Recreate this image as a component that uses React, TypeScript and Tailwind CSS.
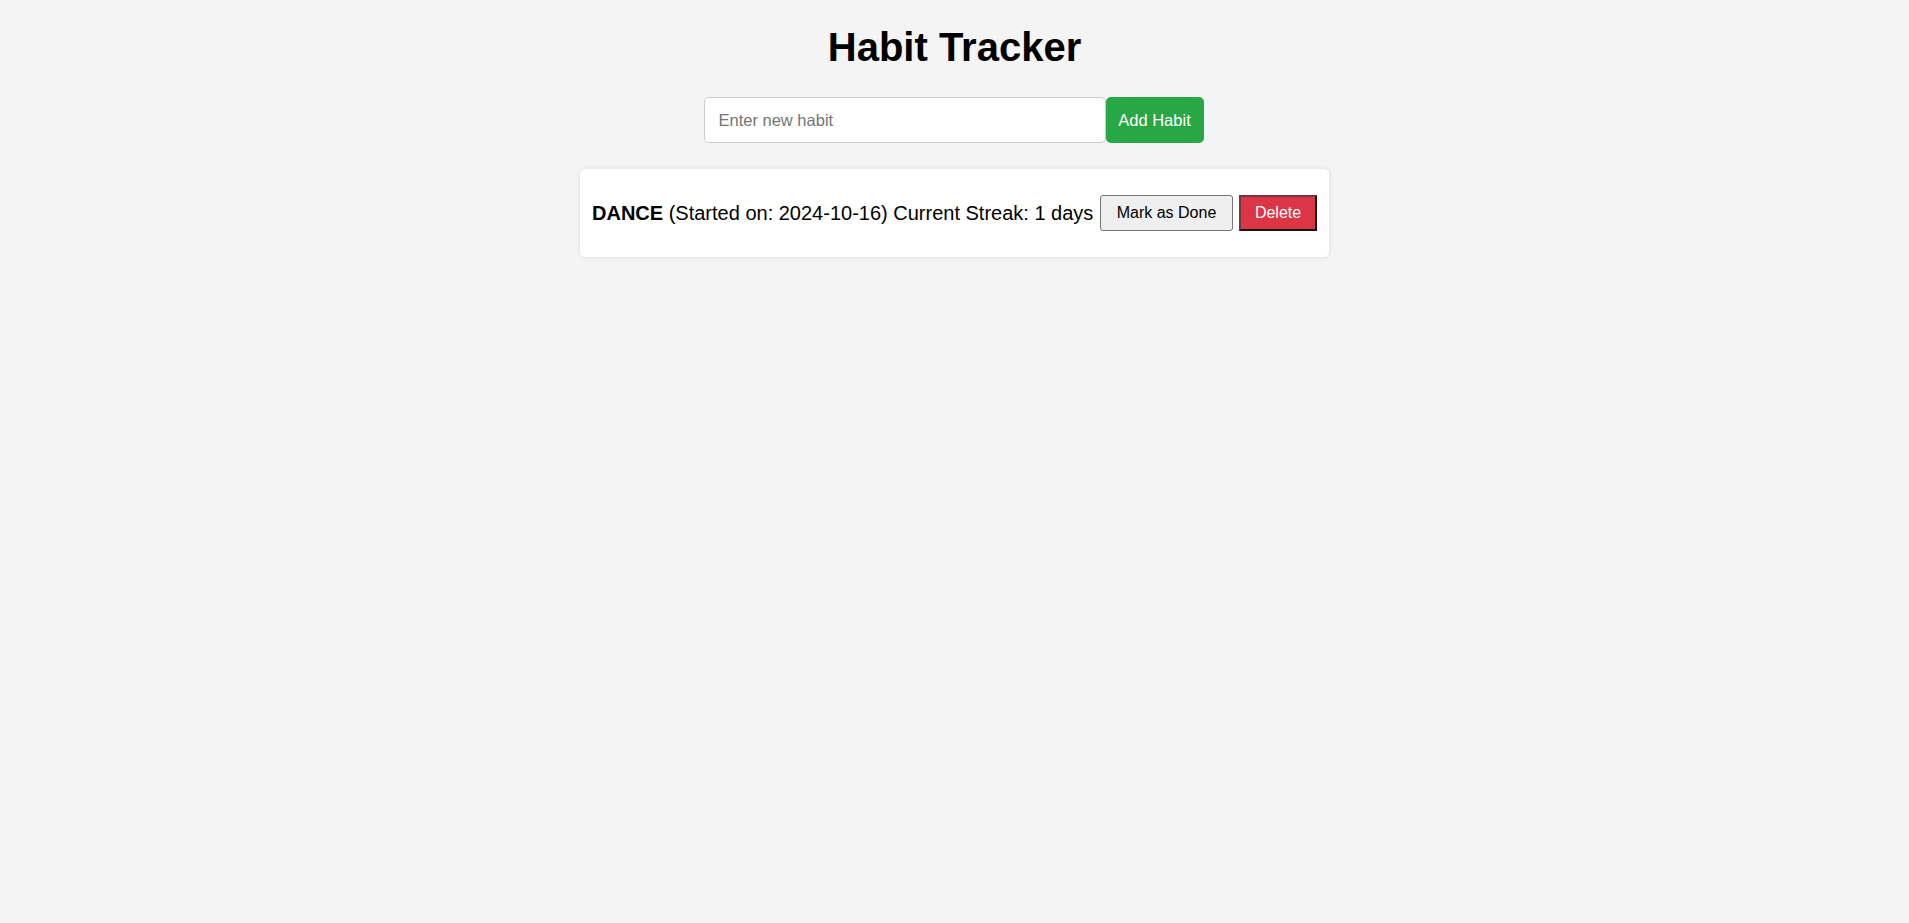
import React from "react";

export default function App() {
  return (
    <div
      className="min-h-screen w-full bg-[#f4f4f4] flex flex-col items-center text-black"
      style={{ fontFamily: '"Liberation Sans", Arial, sans-serif' }}
    >
      <h1 className="mt-[25px] text-[40px] leading-[45px] font-bold">Habit Tracker</h1>

      <div className="mt-[27px] w-[500px] mr-[2px] flex">
        <input
          type="text"
          placeholder="Enter new habit"
          className="w-[402px] shrink-0 h-[46px] bg-white border border-[#cccccc] rounded-[5px] px-[14px] text-[16.5px] outline-none placeholder:text-[#757575]"
        />
        <button className="w-[98px] shrink-0 h-[46px] bg-[#28a745] text-white rounded-[5px] text-[16.5px]">
          Add Habit
        </button>
      </div>

      <div className="mt-[26px] w-[749px] h-[88px] bg-white rounded-[5px] shadow-[0_0_5px_rgba(0,0,0,0.1)] flex items-center justify-between pl-[12px] pr-[12px]">
        <span className="text-[20px] leading-[23px] whitespace-nowrap">
          <strong className="font-bold">DANCE</strong> (Started on: 2024-10-16) Current Streak: 1 days
        </span>
        <div className="flex items-center">
          <button className="w-[133px] h-[36px] bg-[#efefef] border border-[#767676] rounded-[3px] text-[16px] text-black">
            Mark as Done
          </button>
          <button className="ml-[6px] w-[78px] h-[36px] bg-[#dc3545] text-white text-[16px] border-2 border-t-[#6a3a40] border-l-[#6a3a40] border-b-[#141414] border-r-[#141414]">
            Delete
          </button>
        </div>
      </div>
    </div>
  );
}
